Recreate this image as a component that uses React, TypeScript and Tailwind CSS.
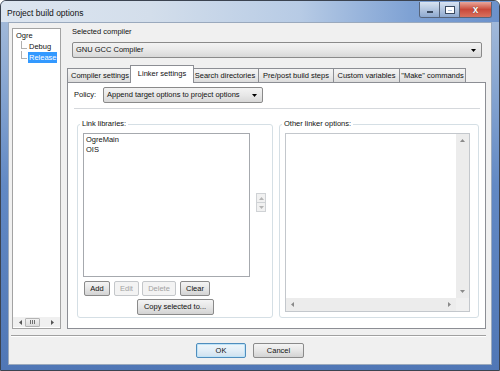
import React from 'react';

// --- small drawings ---
type Dir = 'up' | 'down' | 'left' | 'right';

function Arrow({ dir, color = '#6a6a6a' }: { dir: Dir; color?: string }) {
  const vertical = dir === 'up' || dir === 'down';
  const pts = {
    up: '0,3 2.5,0 5,3',
    down: '0,0 5,0 2.5,3',
    left: '3,0 3,5 0,2.5',
    right: '0,0 0,5 3,2.5',
  }[dir];
  return (
    <svg width={vertical ? 5 : 3} height={vertical ? 3 : 5} viewBox={vertical ? '0 0 5 3' : '0 0 3 5'}>
      <polygon points={pts} fill={color} />
    </svg>
  );
}

function Button({
  children,
  className = '',
  disabled,
  isDefault,
}: {
  children: React.ReactNode;
  className?: string;
  disabled?: boolean;
  isDefault?: boolean;
}) {
  const look = disabled
    ? 'border-[#c4c7ca] bg-[#f3f3f3] text-[#a2a2a2]'
    : isDefault
      ? 'border-[#4f8dbd] bg-linear-to-b from-[#eef6fb] via-[#e2eef7] to-[#cfe1ef] text-[#111] shadow-[inset_0_0_0_1px_#bfe3f7]'
      : 'border-[#8a8a8a] bg-linear-to-b from-[#f4f4f4] via-[#e6e6e6] to-[#d3d3d3] text-[#111]';
  return (
    <div
      className={`flex h-[15px] shrink-0 items-center justify-center rounded-[2px] border text-[7.5px] leading-none ${look} ${className}`}
    >
      {children}
    </div>
  );
}

function Combo({ value, className = '' }: { value: string; className?: string }) {
  return (
    <div
      className={`flex h-[16px] items-center justify-between rounded-[2px] border border-[#8a8a8a] bg-linear-to-b from-[#f3f3f3] via-[#e8e8e8] to-[#d8d8d8] pl-[3px] pr-[5px] text-[7.5px] leading-none ${className}`}
    >
      <span>{value}</span>
      <svg width="5" height="3" viewBox="0 0 5 3">
        <polygon points="0,0 5,0 2.5,3" fill="#000" />
      </svg>
    </div>
  );
}

const tabs = [
  { label: 'Compiler settings', cls: 'w-[66px]' },
  { label: 'Linker settings', cls: 'w-[64px] -ml-[3px]', active: true },
  { label: 'Search directories', cls: 'w-[68px] -ml-[3px]' },
  { label: 'Pre/post build steps', cls: 'w-[76px] -ml-[1px]' },
  { label: 'Custom variables', cls: 'w-[67px] -ml-[1px]' },
  { label: '"Make" commands', cls: 'w-[67px] -ml-[1px]' },
];

export default function App() {
  return (
    <div className="h-[371px] w-[500px] overflow-hidden bg-white font-['Liberation_Sans',Arial,sans-serif] text-[#111]">
      {/* window frame */}
      <div className="flex h-[371px] w-[500px] flex-col rounded-t-[6px] border border-[#3b4350] bg-linear-to-b from-[#a9bfdc] via-[#6289c4] to-[#5077b6]">
        {/* title bar */}
        <div className="flex h-[21px] shrink-0 items-start justify-between rounded-t-[5px] bg-[linear-gradient(to_right,#dce5f0_0%,#d3deeb_30%,#b7cbe5_60%,#7fa2d4_82%,#6b91cb_100%)] pl-[6px] pr-[7px]">
          <span className="mt-[7px] text-[8.5px] leading-[10px]">Project build options</span>
          <div className="mt-[1px] flex h-[16px] overflow-hidden rounded-b-[3px] border border-t-0 border-[#56647a]">
            <div className="flex w-[19px] items-center justify-center bg-linear-to-b from-[#d8e3f1] via-[#b3c6e0] to-[#8ea9cf]">
              <div className="mt-[5px] h-[2px] w-[6px] border border-[#3a4a60] bg-white" />
            </div>
            <div className="flex w-[20px] items-center justify-center border-l border-[#56647a] bg-linear-to-b from-[#d8e3f1] via-[#b3c6e0] to-[#8ea9cf]">
              <div className="h-[6px] w-[8px] border-2 border-t-[3px] border-white outline outline-1 outline-[#3a4a60]" />
            </div>
            <div className="flex w-[32px] items-center justify-center border-l border-[#56647a] bg-linear-to-b from-[#e8a69b] via-[#c9493a] to-[#d8715e]">
              <span className="text-[10px] font-bold leading-none text-white [text-shadow:0_0_1px_#3a2020]">x</span>
            </div>
          </div>
        </div>

        {/* client area */}
        <div className="mx-[7px] mb-[5px] flex flex-1 flex-col border border-[#9aa9bd] bg-[#f0f0f0]">
          <div className="flex items-start">
            {/* tree */}
            <div className="ml-[3px] mt-[5px] flex h-[301px] w-[49px] flex-col border border-[#a3a3a3] bg-white">
              <div className="flex-1 pl-[3px] pt-[1px] text-[7.5px] leading-none">
                <div className="flex h-[11px] items-center">Ogre</div>
                <div className="flex h-[11px] items-center">
                  <div className="-mt-[4px] ml-[5px] h-[8px] w-[6px] border-b border-l border-[#b0b0b0]" />
                  <span className="ml-[1px] px-[1px]">Debug</span>
                </div>
                <div className="flex h-[11px] items-center">
                  <div className="-mt-[5px] ml-[5px] h-[8px] w-[6px] border-b border-l border-[#b0b0b0]" />
                  <span className="ml-[1px] flex h-[11px] w-[29px] items-center bg-[#3399ff] px-[1px] text-white">Release</span>
                </div>
              </div>
              <div className="mb-[1px] flex h-[10px] items-center bg-[#f0f0f0] px-[6px]">
                <Arrow dir="left" color="#555" />
                <div className="ml-[3px] flex h-[9px] w-[15px] items-center justify-center gap-[1px] rounded-[1px] border border-[#b4b4b4] bg-linear-to-b from-[#f2f2f2] to-[#dcdcdc]">
                  <div className="h-[4px] w-px bg-[#707070]" />
                  <div className="h-[4px] w-px bg-[#707070]" />
                  <div className="h-[4px] w-px bg-[#707070]" />
                </div>
                <div className="flex-1" />
                <Arrow dir="right" color="#555" />
              </div>
            </div>

            {/* right column */}
            <div className="ml-[6px] mt-[4px] flex w-[419px] flex-col">
              <div className="h-[10px] pl-[5px] text-[7.5px] leading-[10px]">Selected compiler</div>
              <Combo value="GNU GCC Compiler" className="ml-[5px] mt-[5px] w-[410px]" />

              {/* tabs */}
              <div className="mt-[7px] flex h-[17px] items-end">
                {tabs.map((t) => (
                  <div
                    key={t.label}
                    className={`flex shrink-0 justify-center border border-[#8c8e94] text-[7.5px] leading-none ${t.cls} ${
                      t.active
                        ? 'relative z-10 -mb-[1px] h-[18px] items-start border-b-0 bg-white pt-[4px]'
                        : 'h-[14px] items-center border-b-0 bg-linear-to-b from-[#f5f5f5] via-[#ebebeb] to-[#dcdcdc]'
                    }`}
                  >
                    {t.label}
                  </div>
                ))}
              </div>

              {/* tab panel */}
              <div className="flex h-[247px] flex-col border border-[#8c8e94] bg-white text-[7.5px] leading-none">
                <div className="flex items-center pt-[4px]">
                  <span className="w-[35px] pl-[6px]">Policy:</span>
                  <Combo value="Append target options to project options" className="w-[160px]" />
                </div>
                <div className="mx-[6px] mt-[5px] h-px w-[406px] bg-[#d5d8dc]" />

                <div className="ml-[9px] mt-[10px] flex gap-[6px]">
                  {/* Link libraries */}
                  <fieldset className="flex h-[199px] w-[196px] flex-col rounded-[3px] border border-[#d5dfe5]">
                    <legend className="ml-[2px] px-[2px] text-[7.5px] leading-[10px]">Link libraries:</legend>
                    <div className="mt-[4px] flex">
                      <div className="ml-[5px] h-[144px] w-[167px] border border-[#a6a9ae] bg-white pl-[2px] pt-[1px] leading-[10px]">
                        <div>OgreMain</div>
                        <div>OIS</div>
                      </div>
                      <div className="ml-[6px] mt-[60px] flex flex-col">
                        <div className="flex h-[10px] w-[10px] items-center justify-center border border-[#cfd2d5] bg-[#f1f1f1]">
                          <Arrow dir="up" color="#b5b5b5" />
                        </div>
                        <div className="-mt-px flex h-[10px] w-[10px] items-center justify-center border border-[#cfd2d5] bg-[#f1f1f1]">
                          <Arrow dir="down" color="#b5b5b5" />
                        </div>
                      </div>
                    </div>
                    <div className="mt-[4px] flex">
                      <Button className="ml-[6px] w-[26px]">Add</Button>
                      <Button className="ml-[4px] w-[25px]" disabled>Edit</Button>
                      <Button className="ml-[3px] w-[34px]" disabled>Delete</Button>
                      <Button className="ml-[4px] w-[30px]">Clear</Button>
                    </div>
                    <div className="mt-[3px] flex justify-center">
                      <Button className="h-[16px] w-[77px]">Copy selected to...</Button>
                    </div>
                  </fieldset>

                  {/* Other linker options */}
                  <fieldset className="flex h-[199px] w-[200px] flex-col rounded-[3px] border border-[#d5dfe5]">
                    <legend className="ml-[2px] px-[2px] text-[7.5px] leading-[10px]">Other linker options:</legend>
                    <div className="ml-[5px] mt-[4px] flex h-[179px] w-[185px] flex-col border border-[#c3c7cc] bg-white">
                      <div className="flex flex-1">
                        <div className="flex-1" />
                        <div className="flex w-[13px] flex-col items-center justify-between bg-[#ececec] py-[5px]">
                          <Arrow dir="up" color="#8a8a8a" />
                          <Arrow dir="down" color="#8a8a8a" />
                        </div>
                      </div>
                      <div className="flex h-[13px]">
                        <div className="flex flex-1 items-center justify-between bg-[#ececec] px-[5px]">
                          <Arrow dir="left" color="#8a8a8a" />
                          <Arrow dir="right" color="#8a8a8a" />
                        </div>
                        <div className="w-[13px] bg-[#f0f0f0]" />
                      </div>
                    </div>
                  </fieldset>
                </div>
              </div>
            </div>
          </div>

          {/* bottom separator + buttons */}
          <div className="ml-[2px] mt-[6px] h-[2px] w-[475px] border-t border-b border-t-[#a0a0a0] border-b-white" />
          <div className="mt-[6px] flex justify-center gap-[7px]">
            <Button className="w-[50px]" isDefault>OK</Button>
            <Button className="w-[51px]">Cancel</Button>
          </div>
        </div>
      </div>
    </div>
  );
}
